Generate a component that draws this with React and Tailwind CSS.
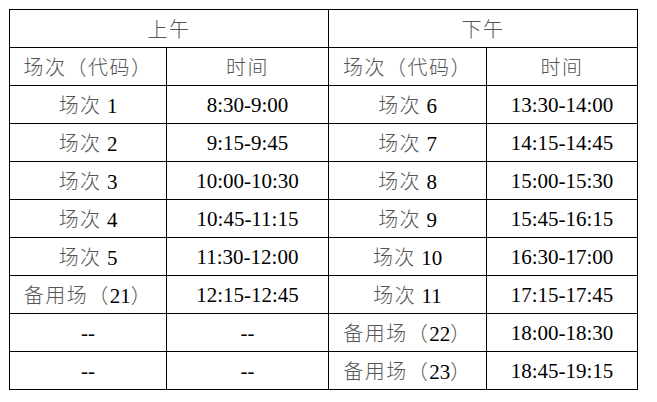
const rows = [
  ["场次 1", "8:30-9:00", "场次 6", "13:30-14:00"],
  ["场次 2", "9:15-9:45", "场次 7", "14:15-14:45"],
  ["场次 3", "10:00-10:30", "场次 8", "15:00-15:30"],
  ["场次 4", "10:45-11:15", "场次 9", "15:45-16:15"],
  ["场次 5", "11:30-12:00", "场次 10", "16:30-17:00"],
  ["备用场（21）", "12:15-12:45", "场次 11", "17:15-17:45"],
  ["--", "--", "备用场（22）", "18:00-18:30"],
  ["--", "--", "备用场（23）", "18:45-19:15"],
];

// CJK parts are drawn a bit lighter and wider spaced, like the thin Song face in the doc
const Txt = ({ children }) => {
  const parts = children.split(/([\u3000-\u9fff\uff00-\uffef]+)/);
  return (
    <span>
      {parts.map((p, i) =>
        /[\u3000-\u9fff\uff00-\uffef]/.test(p) ? (
          <span
            key={i}
            className="text-[20px] tracking-[1.5px] font-light text-[#555] font-['Noto_Sans_CJK_SC',sans-serif]"
          >
            {p}
          </span>
        ) : (
          <span key={i}>{p}</span>
        )
      )}
    </span>
  );
};

const Cell = ({ children, className = "" }) => (
  <div className={`bg-white flex items-center justify-center pt-[2px] ${className}`}>
    <Txt>{children}</Txt>
  </div>
);

export default function App() {
  return (
    <div className="bg-white w-[657px] h-[402px] pt-[9px] pl-[9px] font-['Liberation_Serif','Noto_Sans_CJK_SC',serif] text-[21px] text-black leading-none">
      <div className="inline-grid grid-cols-[156px_161px_157px_150px] auto-rows-[37px] gap-px p-px bg-black">
        <Cell className="col-span-2">上午</Cell>
        <Cell className="col-span-2">下午</Cell>
        <Cell>场次（代码）</Cell>
        <Cell>时间</Cell>
        <Cell>场次（代码）</Cell>
        <Cell>时间</Cell>
        {rows.map((r, i) =>
          r.map((c, j) => <Cell key={`${i}-${j}`}>{c}</Cell>)
        )}
      </div>
    </div>
  );
}
